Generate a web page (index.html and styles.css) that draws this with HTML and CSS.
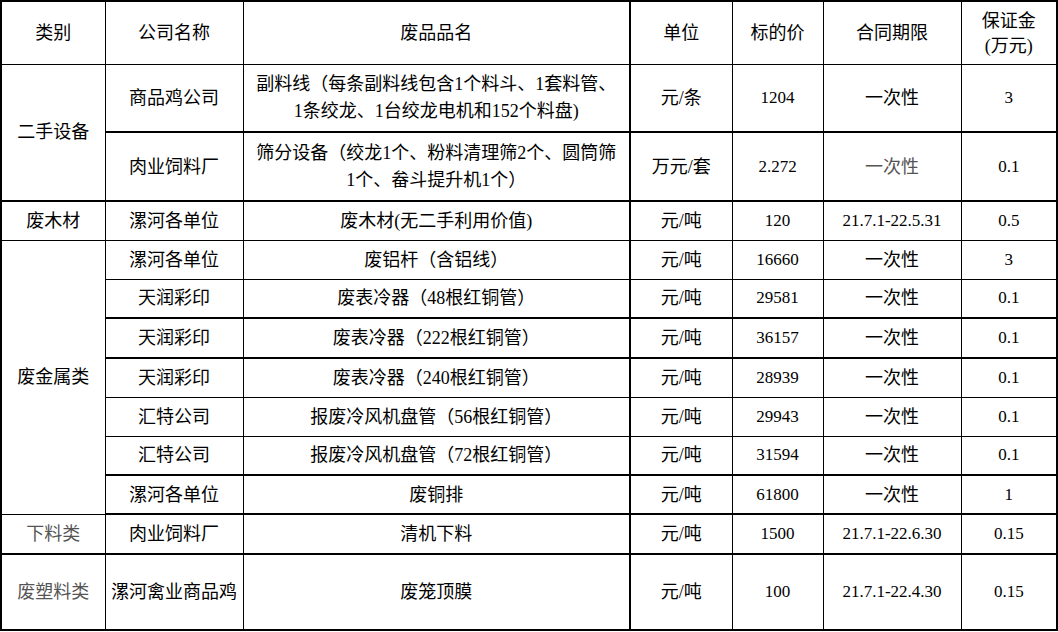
FILE: index.html
```html
<!DOCTYPE html>
<html lang="zh-CN">
<head>
<meta charset="utf-8">
<title>废品处置清单</title>
<link rel="stylesheet" href="styles.css">
</head>
<body>
<table class="sheet">
  <colgroup>
    <col class="c-cat"><col class="c-co"><col class="c-name"><col class="c-unit"><col class="c-price"><col class="c-term"><col class="c-dep">
  </colgroup>
  <thead>
    <tr class="r-head">
      <th>类别</th><th>公司名称</th><th>废品品名</th><th class="unit">单位</th><th>标的价</th><th>合同期限</th><th class="dep-head">保证金<br>(万元)</th>
    </tr>
  </thead>
  <tbody>
    <tr class="r-68 tb">
      <td rowspan="2" class="tb">二手设备</td><td>商品鸡公司</td>
      <td class="desc">副料线（每条副料线包含1个料斗、1套料管、<br>1条绞龙、1台绞龙电机和152个料盘)</td>
      <td class="unit">元/条</td><td class="num">1204</td><td>一次性</td><td class="num">3</td>
    </tr>
    <tr class="r-69 tb">
      <td>肉业饲料厂</td>
      <td class="desc">筛分设备（绞龙1个、粉料清理筛2个、圆筒筛<br>1个、畚斗提升机1个）</td>
      <td class="unit">万元/套</td><td class="num">2.272</td><td class="faint">一次性</td><td class="num">0.1</td>
    </tr>
    <tr class="r-39">
      <td>废木材</td><td>漯河各单位</td><td>废木材(无二手利用价值)</td>
      <td class="unit">元/吨</td><td class="num">120</td><td class="num">21.7.1-22.5.31</td><td class="num">0.5</td>
    </tr>
    <tr class="r-39">
      <td rowspan="7" class="tb">废金属类</td><td>漯河各单位</td><td>废铝杆（含铝线）</td>
      <td class="unit">元/吨</td><td class="num">16660</td><td>一次性</td><td class="num">3</td>
    </tr>
    <tr class="r-39 tb">
      <td>天润彩印</td><td>废表冷器（48根红铜管）</td>
      <td class="unit">元/吨</td><td class="num">29581</td><td>一次性</td><td class="num">0.1</td>
    </tr>
    <tr class="r-40 tb">
      <td>天润彩印</td><td>废表冷器（222根红铜管）</td>
      <td class="unit">元/吨</td><td class="num">36157</td><td>一次性</td><td class="num">0.1</td>
    </tr>
    <tr class="r-39">
      <td>天润彩印</td><td>废表冷器（240根红铜管）</td>
      <td class="unit">元/吨</td><td class="num">28939</td><td>一次性</td><td class="num">0.1</td>
    </tr>
    <tr class="r-39">
      <td>汇特公司</td><td>报废冷风机盘管（56根红铜管）</td>
      <td class="unit">元/吨</td><td class="num">29943</td><td>一次性</td><td class="num">0.1</td>
    </tr>
    <tr class="r-39 tb">
      <td>汇特公司</td><td>报废冷风机盘管（72根红铜管）</td>
      <td class="unit">元/吨</td><td class="num">31594</td><td>一次性</td><td class="num">0.1</td>
    </tr>
    <tr class="r-39 tb">
      <td>漯河各单位</td><td>废铜排</td>
      <td class="unit">元/吨</td><td class="num">61800</td><td>一次性</td><td class="num">1</td>
    </tr>
    <tr class="r-40 tb">
      <td class="faint">下料类</td><td>肉业饲料厂</td><td>清机下料</td>
      <td class="unit">元/吨</td><td class="num">1500</td><td class="num">21.7.1-22.6.30</td><td class="num">0.15</td>
    </tr>
    <tr class="r-76 tb">
      <td class="faint">废塑料类</td><td>漯河禽业商品鸡</td><td>废笼顶膜</td>
      <td class="unit">元/吨</td><td class="num">100</td><td class="num">21.7.1-22.4.30</td><td class="num">0.15</td>
    </tr>
  </tbody>
</table>
</body>
</html>
```

FILE: styles.css
```css
html, body {
  margin: 0;
  padding: 0;
  background: #ffffff;
}

.sheet {
  border-collapse: collapse;
  table-layout: fixed;
  width: 1057px;
  font-family: "Liberation Serif", "Noto Sans CJK SC", serif;
  font-size: 18px;
  color: #000;
  border: 2px solid #000;
}

.c-cat { width: 104px; }
.c-co { width: 138px; }
.c-name { width: 387px; }
.c-unit { width: 102px; }
.c-price { width: 91px; }
.c-term { width: 138px; }
.c-dep { width: 96px; }

.sheet th,
.sheet td {
  border: 1px solid #000;
  padding: 0;
  text-align: center;
  vertical-align: middle;
  font-weight: normal;
  line-height: 26px;
  white-space: nowrap;
  overflow: hidden;
}

.sheet .unit { border-left: 2px solid #000; }

.sheet tr.tb > td { border-bottom: 2px solid #000; }

.r-head { height: 63px; }
.sheet .dep-head { line-height: 25px; padding-top: 3px; }
.r-68 { height: 68px; }
.r-69 { height: 69px; }
.r-39 { height: 39px; }
.r-40 { height: 40px; }
.r-76 { height: 76px; }

.sheet td.desc {
  line-height: 27px;
}

.sheet .num {
  font-size: 17px;
}

.sheet .faint {
  color: #555;
}
```
